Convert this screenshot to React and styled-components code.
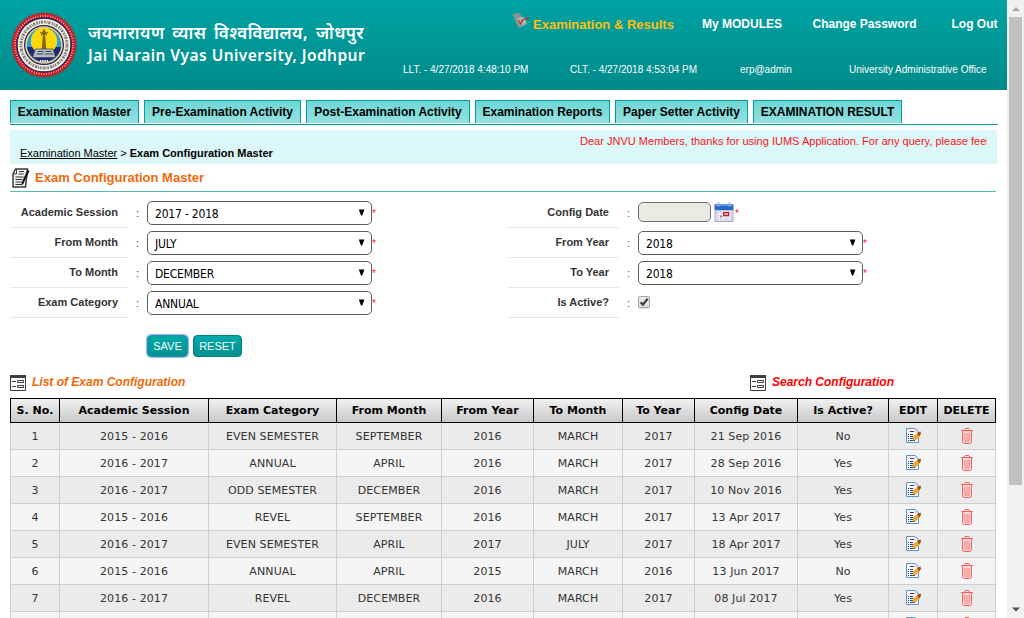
import React from "react";
import styled, { createGlobalStyle, css } from "styled-components";

const GlobalStyle = createGlobalStyle`
  html, body { margin: 0; padding: 0; height: 618px; overflow: hidden; background: #fff; }
  body { font-family: "Liberation Sans", Arial, sans-serif; font-size: 11px; color: #000; }
  * { box-sizing: border-box; }
`;

const Shell = styled.div`
  display: flex;
  width: 1024px;
  height: 618px;
  overflow: hidden;
`;
const Page = styled.div`
  width: 1007px;
  height: 618px;
  overflow: hidden;
`;

/* ---------- scrollbar ---------- */
const Scrollbar = styled.div`
  width: 17px;
  height: 618px;
  background: #f1f1f1;
  display: flex;
  flex-direction: column;
  justify-content: space-between;
  align-items: flex-start;
  padding-left: 2px;
`;
const Thumb = styled.div`
  width: 13px;
  height: 468px;
  background: #c1c1c1;
`;
const ScrollTop = styled.div`
  line-height: 0;
`;

/* ---------- header ---------- */
const Header = styled.header`
  height: 90px;
  display: flex;
  background: linear-gradient(#00a3a3, #008a8a);
  color: #fff;
`;
const Brand = styled.div`
  display: flex;
  width: 390px;
  padding: 11px 0 0 11px;
  gap: 11px;
`;
const BrandText = styled.div`
  padding-top: 13px;
  white-space: nowrap;
`;
const HindiName = styled.div`
  height: 22px;
  font: 600 17px/22px "Noto Sans Devanagari", "Noto Sans", sans-serif;
  letter-spacing: 0.4px;
  word-spacing: 3px;
`;
const EnglishName = styled.div`
  height: 20px;
  font: 600 15.5px/18px "Noto Sans", sans-serif;
  letter-spacing: 0.45px;
`;
const HeaderRight = styled.div`
  flex: 1;
`;
const Menu = styled.nav`
  display: flex;
  height: 48px;
  padding: 12px 0 0 122px;
  font-weight: bold;
  font-size: 12px;
  line-height: 24px;
  white-space: nowrap;
`;
const MenuItem = styled.a`
  margin-left: ${(p) => p.$gap}px;
  width: ${(p) => p.$w}px;
  ${(p) => p.$active && css`color: #fdbf0f; font-size: 13px; line-height: 25px;`}
`;
const InfoBar = styled.div`
  display: flex;
  height: 42px;
  padding: 12px 0 0 13px;
  font-size: 10px;
  line-height: 20px;
  white-space: nowrap;
`;
const Info = styled.span`
  width: ${(p) => p.$w}px;
`;

/* ---------- tabs ---------- */
const Tabs = styled.nav`
  display: flex;
  gap: 5px;
  margin: 10px 9px 0 10px;
  height: 25px;
  border-bottom: 1px solid #009e9e;
`;
const Tab = styled.a`
  width: ${(p) => p.$w}px;
  height: 23px;
  border: 1px solid #009e9e;
  border-bottom: 0;
  background: linear-gradient(#6ed6d4, #93e2e1);
  font-weight: bold;
  font-size: 12px;
  line-height: 23px;
  text-align: center;
  white-space: nowrap;
`;

const CrumbBar = styled.div`
  margin: 5px 10px 0 10px;
  height: 34px;
  padding: 0 10px;
  background: #dcf7f7;
  display: flex;
  justify-content: space-between;
  white-space: nowrap;
`;
const Crumbs = styled.div`
  padding-top: 16px;
  line-height: 14px;
`;
const Marquee = styled.div`
  width: 407px;
  overflow: hidden;
  padding-top: 4px;
  line-height: 14px;
  letter-spacing: 0.015px;
  color: #f5141a;
`;
const PageTitle = styled.h1`
  margin: 0 11px 0 10px;
  height: 28px;
  display: flex;
  align-items: flex-start;
  gap: 4px;
  border-bottom: 1px solid #56bdb6;
  color: #ee6a0b;
  font-size: 13px;
  line-height: 27px;
`;
const TitleIcon = styled.span`
  width: 21px;
  padding: 4px 0 0 2px;
  line-height: 0;
`;

/* ---------- form ---------- */
const Form = styled.form`
  display: flex;
  height: 126px;
  padding: 6px 0 0 10px;
`;
const FormColumn = styled.div`
  width: ${(p) => p.$w}px;
`;
const FormRow = styled.div`
  display: flex;
  height: 30px;
`;
const Label = styled.label`
  width: ${(p) => p.$w}px;
  height: 30px;
  padding-right: 10px;
  border-bottom: 1px solid #e6e6e6;
  font-weight: bold;
  line-height: 29px;
  text-align: right;
  color: #333;
`;
const Colon = styled.span`
  width: 19px;
  text-align: center;
  line-height: 31px;
  color: ${(p) => p.$color};
`;
const Select = styled.div`
  margin-top: 3px;
  width: 225px;
  height: 24px;
  border: 1px solid #5c5c5c;
  border-radius: 5px;
  padding: 0 6px 0 7px;
  display: flex;
  justify-content: space-between;
  font: 12px/24px "DejaVu Sans Condensed", "DejaVu Sans", sans-serif;
  font-stretch: condensed;
  letter-spacing: -0.2px;
  color: #000;
`;
const Arrow = styled.span`
  padding-top: 7px;
  line-height: 0;
`;
const Star = styled.span`
  margin-left: ${(p) => p.$gap || 0}px;
  font: 10px/31px "Liberation Sans", sans-serif;
  color: #ff2020;
`;
const DateInput = styled.div`
  margin: 4px 3px 0 0;
  width: 73px;
  height: 20px;
  border: 1px solid #6c6c6c;
  border-radius: 5px;
  background: #ebebe4;
`;
const CalendarSlot = styled.span`
  padding-top: 4px;
  line-height: 0;
`;
const Check = styled.span`
  margin-top: 8px;
  width: 12px;
  height: 12px;
  border: 1px solid #a6a6a6;
  border-radius: 2px;
  background: linear-gradient(#ececec, #dcdcdc);
  box-shadow: 0 1px 1px rgba(0, 0, 0, 0.12);
  line-height: 0;
`;
const Buttons = styled.div`
  display: flex;
  gap: 5px;
  margin: 17px 0 0 147px;
  height: 22px;
`;
const Button = styled.button`
  width: ${(p) => p.$w}px;
  height: 22px;
  padding: 0;
  border: 1px solid #00807f;
  border-radius: 4px;
  background: linear-gradient(#00a9a9, #009090);
  color: #fff;
  font: 11px "Liberation Sans", sans-serif;
  ${(p) => p.$focus && css`border-color: #2f8fae; box-shadow: 0 0 0 1px #92b7f2;`}
`;

/* ---------- list ---------- */
const ListHeads = styled.div`
  display: flex;
  margin: 17px 0 0 10px;
  height: 24px;
`;
const ListHead = styled.div`
  width: ${(p) => p.$w}px;
  display: flex;
  gap: 6px;
  color: ${(p) => p.$color};
  font: italic bold 12px/16px "Liberation Sans", sans-serif;
  white-space: nowrap;
  & > svg { margin-top: 1px; }
`;
const Grid = styled.div`
  margin-left: 10px;
  width: 986px;
  font: 11px "DejaVu Sans", Verdana, sans-serif;
`;
const columns = "49px 149px 128px 105px 92px 89px 72px 103px 91px 49px 58px";
const HeadRow = styled.div`
  display: grid;
  grid-template-columns: ${columns};
  height: 25px;
  border: solid #000;
  border-width: 1px 0 1px 1px;
  background: linear-gradient(#f1f1f1, #c9c9c9);
`;
const HeadCell = styled.div`
  border-right: 1px solid #000;
  font-weight: bold;
  line-height: 24px;
  text-align: center;
  white-space: nowrap;
`;
const Row = styled.div`
  display: grid;
  grid-template-columns: ${columns};
  height: 27px;
  border-left: 1px solid #cfcfcf;
  border-bottom: 1px solid #cfcfcf;
  background: ${(p) => (p.$odd ? "#ebebeb" : "#f5f5f5")};
`;
const Cell = styled.div`
  border-right: 1px solid #cfcfcf;
  display: flex;
  justify-content: center;
  align-items: center;
  color: #333;
  letter-spacing: 0.1px;
  white-space: nowrap;
`;

/* ---------- drawings ---------- */
const Seal = () => (
  <svg width="66" height="68" viewBox="0 0 66 68">
    <circle cx="33" cy="34" r="31.2" fill="#d8141c" />
    <circle cx="33" cy="34" r="31.8" fill="none" stroke="#d8141c" strokeWidth="1.6" strokeDasharray="2 1.1" />
    <circle cx="33" cy="34" r="29" fill="none" stroke="#f6c9bf" strokeWidth="2" strokeDasharray="0.8 1.7" />
    <circle cx="33" cy="34" r="27" fill="#f5efdc" stroke="#1d2365" strokeWidth="1.3" />
    <circle cx="33" cy="34" r="23" fill="none" stroke="#3f3f4c" strokeWidth="3" strokeDasharray="1.6 0.9 1 0.8 2.2 1.2" opacity="0.65" />
    <circle cx="33" cy="34" r="19.4" fill="#f6cf7c" stroke="#1d2365" strokeWidth="1.2" />
    <circle cx="33" cy="34" r="17.2" fill="#2b9be0" />
    <path d="M16 36 A17.2 17.2 0 0 0 50 36 Z" fill="#1b2c78" />
    <circle cx="33" cy="30" r="13.2" fill="#fcd90a" />
    <path d="M32.200 20 h1.600 l1.400 18 h-4.400z" fill="#8a6414" />
    <path d="M29 21.500 q4 3 8 0 M30.500 24.500 l2.500 -6 l2.500 6" stroke="#6f5410" strokeWidth="1" fill="none" />
    <path d="M24.500 38 h17.500 l2.500 8.500 h-23z" fill="#b9bdc4" stroke="#40485e" strokeWidth="0.800" />
    <path d="M26.500 40.500 h6 M34.500 40.500 h6 M25.500 43 h7 M34 43 h8" stroke="#39405c" strokeWidth="1" />
    <path d="M29 50 h8" stroke="#e5e8f5" strokeWidth="2" strokeDasharray="1.500 0.700" />
  </svg>
);

const ExamIcon = () => (
  <svg width="18" height="17" viewBox="0 0 18 17">
    <path d="M0.500 2.500 L7 1 L15.500 12 L7.500 16 L5 13z" fill="#7d9a9a" />
    <path d="M0.500 2.500 L7 1 L9 4 L4 7z" fill="#8e8f8c" />
    <path d="M5 6 l7 -1 l3 6 l-7 3z" fill="#9fb9b7" />
    <path d="M6.500 8 l2 4 l2 -4 l6.500 -2.500" fill="none" stroke="#d5281a" strokeWidth="1.300" />
  </svg>
);

const NotesIcon = () => (
  <svg width="18" height="20" viewBox="0 0 18 20">
    <path d="M3.500 1 H15.500 L13.500 19 H1 V6z" fill="#f2f2f2" stroke="#3b3b3b" strokeWidth="1.500" />
    <path d="M4.500 1.500 V6 H1.500" fill="none" stroke="#3b3b3b" />
    <path d="M7 3.500 h5 M6.500 6 h5 M3.500 9 h8 M3.500 11.500 h7 M3.500 14 h6 M3.500 16.500 h7" stroke="#333" strokeWidth="1.100" />
    <path d="M15.500 2 l2 1 l-6 12.500 l-2 1.500 l0.200 -2.600z" fill="#111" />
  </svg>
);

const ArrowIcon = () => (
  <svg width="7" height="7" viewBox="0 0 7 7"><path d="M0.800 0.500 h5.600 l-2.200 6 h-1.200z" fill="#000" /></svg>
);

const CalendarIcon = () => (
  <svg width="20" height="21" viewBox="0 0 20 21">
    <rect x="1" y="8" width="18" height="11.500" fill="#d9d9ea" stroke="#9a9ac4" strokeWidth="0.800" />
    <rect x="0.500" y="2" width="19" height="6" rx="1" fill="#2467cc" />
    <rect x="0.500" y="2" width="19" height="2" rx="1" fill="#5a96e4" />
    <path d="M4.500 0.500 v4 M15.500 0.500 v4" stroke="#9fa5b8" strokeWidth="2" />
    <path d="M2 12.500 h16 M2 16 h16 M5.500 9 v10 M9 9 v10 M15.500 9 v10" stroke="#f4f4fb" strokeWidth="0.800" />
    <rect x="6" y="13.500" width="2" height="2" fill="#8c8cb0" />
    <rect x="9.600" y="10.600" width="5" height="3" fill="#cfc3dc" stroke="#e0101a" strokeWidth="1.200" />
  </svg>
);

const CheckIcon = () => (
  <svg width="10" height="10" viewBox="0 0 10 10"><path d="M1.600 5.300 L3.900 7.600 L8.600 1.800" fill="none" stroke="#3c3c3c" strokeWidth="2.200" /></svg>
);

const FormIcon = () => (
  <svg width="16" height="16" viewBox="0 0 16 16">
    <path d="M0.500 0.500 h15 v15 h-15z" fill="#fff" stroke="#3d3d3d" />
    <path d="M0 0 h16 v3 h-16z" fill="#3d3d3d" />
    <path d="M2 6.500 h4 M2 11.500 h4" stroke="#3d3d3d" />
    <path d="M7.500 5.500 h6 v2 h-6z M7.500 10.500 h6 v2 h-6z" fill="#fff" stroke="#3d3d3d" />
  </svg>
);

const EditIcon = () => (
  <svg width="16" height="16" viewBox="0 0 16 16">
    <path d="M1.500 0.500 h9 l3 3 v11 h-12z" fill="#f6fafe" stroke="#5b93cc" />
    <path d="M10 0.500 v3.500 h3.500" fill="#dde8f4" stroke="#b5cbe2" strokeWidth="0.800" />
    <path d="M5 3.500 h4" stroke="#9b1420" />
    <path d="M3 6.500 h1 M5 6.500 h3 M3 8.500 h1 M5 8.500 h3 M3 10.500 h1 M5 10.500 h3 M3 12.500 h1 M5 12.500 h5" stroke="#1f3a74" strokeWidth="1.100" />
    <path d="M7.500 12.500 l0.500 -4.500 l5 -3 l2.200 3 l-4.200 4z" fill="#eba93a" />
    <path d="M12 5 l3.500 -1.500 l0.500 2.500 l-2 2.500z" fill="#9a4f12" />
  </svg>
);

const TrashIcon = () => (
  <svg width="12" height="16" viewBox="0 0 12 16">
    <path d="M0 2.500 h12 M4 0.500 h4 M3.500 1 v1.500 M8.500 1 v1.500" stroke="#fa5f60" fill="none" />
    <path d="M1.500 3 v10.500 q0 2 2 2 h5 q2 0 2 -2 v-10.500" fill="#fbd9d9" stroke="#fa5f60" />
    <path d="M3.800 5 v6 l0.700 3 M6 5 v9 M8.200 5 v6 l-0.700 3" stroke="#fa6f70" fill="none" strokeWidth="0.900" />
  </svg>
);

/* ---------- data ---------- */
const tabs = [
  ["Examination Master", 129],
  ["Pre-Examination Activity", 157],
  ["Post-Examination Activity", 164],
  ["Examination Reports", 135],
  ["Paper Setter Activity", 133],
  ["EXAMINATION RESULT", 149],
];
const heads = ["S. No.", "Academic Session", "Exam Category", "From Month", "From Year", "To Month", "To Year", "Config Date", "Is Active?", "EDIT", "DELETE"];
const rows = [
  ["1", "2015 - 2016", "EVEN SEMESTER", "SEPTEMBER", "2016", "MARCH", "2017", "21 Sep 2016", "No"],
  ["2", "2016 - 2017", "ANNUAL", "APRIL", "2016", "MARCH", "2017", "28 Sep 2016", "Yes"],
  ["3", "2016 - 2017", "ODD SEMESTER", "DECEMBER", "2016", "MARCH", "2017", "10 Nov 2016", "Yes"],
  ["4", "2015 - 2016", "REVEL", "SEPTEMBER", "2016", "MARCH", "2017", "13 Apr 2017", "Yes"],
  ["5", "2016 - 2017", "EVEN SEMESTER", "APRIL", "2017", "JULY", "2017", "18 Apr 2017", "Yes"],
  ["6", "2015 - 2016", "ANNUAL", "APRIL", "2015", "MARCH", "2016", "13 Jun 2017", "No"],
  ["7", "2016 - 2017", "REVEL", "DECEMBER", "2016", "MARCH", "2017", "08 Jul 2017", "Yes"],
  ["", "", "", "", "", "", "", "", ""],
];
const leftFields = [
  ["Academic Session", "2017 - 2018"],
  ["From Month", "JULY"],
  ["To Month", "DECEMBER"],
  ["Exam Category", "ANNUAL"],
];

const SelectField = ({ value }) => (
  <>
    <Select>
      {value}
      <Arrow><ArrowIcon /></Arrow>
    </Select>
    <Star>*</Star>
  </>
);

export default function App() {
  return (
    <Shell>
      <GlobalStyle />
      <Page>
        <Header>
          <Brand>
            <Seal />
            <BrandText>
              {/* the joiner keeps the half form of श before व */}
              <HindiName lang="hi">{"जयनारायण व्यास विश्\u200Dवविद्यालय, जोधपुर"}</HindiName>
              <EnglishName>Jai Narain Vyas University, Jodhpur</EnglishName>
            </BrandText>
          </Brand>
          <HeaderRight>
            <Menu>
              <ExamIcon />
              <MenuItem $active $gap={3} $w={141}>Examination &amp; Results</MenuItem>
              <MenuItem $gap={28} $w={82}>My MODULES</MenuItem>
              <MenuItem $gap={28.5} $w={104}>Change Password</MenuItem>
              <MenuItem $gap={35} $w={48}>Log Out</MenuItem>
            </Menu>
            <InfoBar>
              <Info $w={167}>LLT. - 4/27/2018 4:48:10 PM</Info>
              <Info $w={170}>CLT. - 4/27/2018 4:53:04 PM</Info>
              <Info $w={109}>erp@admin</Info>
              <Info $w={140}>University Administrative Office</Info>
            </InfoBar>
          </HeaderRight>
        </Header>

        <Tabs>
          {tabs.map(([t, w]) => <Tab key={t} $w={w}>{t}</Tab>)}
        </Tabs>

        <CrumbBar>
          <Crumbs><u>Examination Master</u> &gt; <b>Exam Configuration Master</b></Crumbs>
          <Marquee>Dear JNVU Members, thanks for using IUMS Application. For any query, please feel</Marquee>
        </CrumbBar>

        <PageTitle><TitleIcon><NotesIcon /></TitleIcon>Exam Configuration Master</PageTitle>

        <Form>
          <FormColumn $w={498}>
            {leftFields.map(([l, v]) => (
              <FormRow key={l}>
                <Label $w={118}>{l}</Label>
                <Colon $color="#444">:</Colon>
                <SelectField value={v} />
              </FormRow>
            ))}
          </FormColumn>
          <FormColumn $w={400}>
            <FormRow>
              <Label $w={111}>Config Date</Label>
              <Colon $color="#80308a">:</Colon>
              <DateInput />
              <CalendarSlot><CalendarIcon /></CalendarSlot>
              <Star $gap={1}>*</Star>
            </FormRow>
            {["From Year", "To Year"].map((l) => (
              <FormRow key={l}>
                <Label $w={111}>{l}</Label>
                <Colon $color="#80308a">:</Colon>
                <SelectField value="2018" />
              </FormRow>
            ))}
            <FormRow>
              <Label $w={111}>Is Active?</Label>
              <Colon $color="#80308a">:</Colon>
              <Check><CheckIcon /></Check>
            </FormRow>
          </FormColumn>
        </Form>

        <Buttons>
          <Button $w={41} $focus>SAVE</Button>
          <Button $w={49}>RESET</Button>
        </Buttons>

        <ListHeads>
          <ListHead $w={740} $color="#ee6a0b"><FormIcon />List of Exam Configuration</ListHead>
          <ListHead $w={200} $color="#f00"><FormIcon />Search Configuration</ListHead>
        </ListHeads>

        <Grid>
          <HeadRow>
            {heads.map((h) => <HeadCell key={h}>{h}</HeadCell>)}
          </HeadRow>
          {rows.map((r, i) => (
            <Row key={i} $odd={i % 2 === 0}>
              {r.map((c, j) => <Cell key={j}>{c}</Cell>)}
              <Cell><EditIcon /></Cell>
              <Cell><TrashIcon /></Cell>
            </Row>
          ))}
        </Grid>
      </Page>

      <Scrollbar>
        <ScrollTop>
          <svg width="13" height="17" viewBox="0 0 13 17"><path d="M3 11 h8 l-4 -4z" fill="#a3a3a3" /></svg>
          <Thumb />
        </ScrollTop>
        <svg width="13" height="17" viewBox="0 0 13 17"><path d="M3 6.500 h8 l-4 4z" fill="#505050" /></svg>
      </Scrollbar>
    </Shell>
  );
}
